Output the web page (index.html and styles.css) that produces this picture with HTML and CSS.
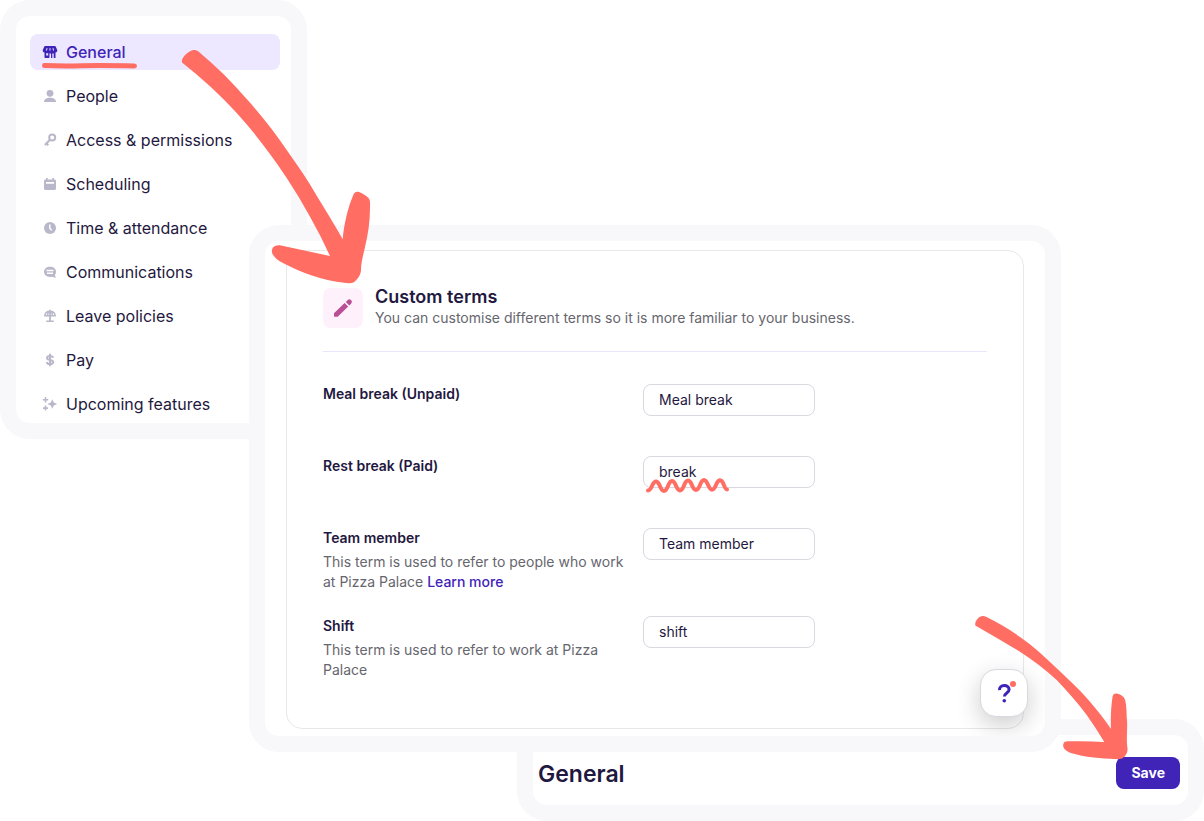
FILE: index.html
```html
<!DOCTYPE html>
<html lang="en">
<head>
<meta charset="utf-8">
<title>General settings</title>
<link rel="stylesheet" href="styles.css">
</head>
<body>
<main class="collage">
  <section class="panel panel-nav">
    <nav class="nav" aria-label="Settings">
      <a class="nav-item is-active" href="#general">
        <svg class="nav-icon" viewBox="0 0 16 16"><path fill-rule="evenodd" d="M3.200 2h9.600c.5 0 .8.2.9.600L15.200 6c.4 1.200-.3 2.300-1.700 2.400V14H9V9.500H7.500V13c0 .6-.4 1-1 1h-3c-.6 0-1-.4-1-1V8.400C1.100 8.300.4 7.200.8 6l1.500-3.400c.1-.4.4-.6.900-.6zM4.200 9.200v2.300h2V9.200zM10.300 9.500V14h1.400V9.500z"/><path class="awning" d="M5 4.200L4.500 6.500M8 4.200v2.300M11 4.200l.5 2.300"/></svg>
        <span>General</span>
        <svg class="underline" viewBox="0 0 96 8" aria-hidden="true"><path d="M2.500 3.500Q20 4.200 40 3.700T92.500 4"/></svg>
      </a>
      <a class="nav-item" href="#people">
        <svg class="nav-icon" viewBox="0 0 16 16"><circle cx="8" cy="5.300" r="3.400"/><path d="M2 14c0-2.600 2.200-4.200 6-4.200s6 1.600 6 4.200z"/></svg>
        <span>People</span>
      </a>
      <a class="nav-item" href="#access">
        <svg class="nav-icon" viewBox="0 0 16 16"><circle class="line" cx="10.200" cy="5.600" r="3"/><path class="line" d="M8 7.800L2.900 13M4.300 11.300l2 2"/></svg>
        <span>Access &amp; permissions</span>
      </a>
      <a class="nav-item" href="#scheduling">
        <svg class="nav-icon" viewBox="0 0 16 16"><path fill-rule="evenodd" d="M4 2h1.700v1.500h4.600V2H12v1.500h.5c.9 0 1.500.6 1.500 1.500v7.500c0 .9-.6 1.500-1.500 1.500h-9c-.9 0-1.500-.6-1.500-1.500V5c0-.9.600-1.500 1.500-1.500H4zM4 6v1.800h8V6z"/></svg>
        <span>Scheduling</span>
      </a>
      <a class="nav-item" href="#time">
        <svg class="nav-icon" viewBox="0 0 16 16"><circle cx="8" cy="8" r="6"/><path class="cut" d="M7.800 4.500v4l2 1.800"/></svg>
        <span>Time &amp; attendance</span>
      </a>
      <a class="nav-item" href="#communications">
        <svg class="nav-icon" viewBox="0 0 16 16"><path d="M8 2.800c3.500 0 6 2 6 4.900 0 1.500-.6 2.600-1.200 3.400L14 13.800l-4.200-1.100c-.6.100-1.200.2-1.800.2-3.500 0-6-2.200-6-5.100s2.500-5 6-5z"/><path class="cut" d="M4.500 6.500h7M5 9.300h6"/></svg>
        <span>Communications</span>
      </a>
      <a class="nav-item" href="#leave">
        <svg class="nav-icon" viewBox="0 0 16 16"><path fill-rule="evenodd" d="M7.200 2.600V1.800h1.600v.8C12 2.900 14 5 14 8.500h-3.200H8.900v4h2.900V14H4.200v-1.500h2.900v-4H2C2 5 4 2.900 7.200 2.600zM5.400 4.700C4.400 5.300 3.800 6.100 3.600 7.100h1.300c0-.9.200-1.700.5-2.400zM7.100 4.700c-.5.700-.8 1.500-.8 2.400h.8zM8.900 4.700v2.400h.8c0-.9-.3-1.700-.8-2.400zM10.600 4.700c.3.700.5 1.500.5 2.400h1.300c-.2-1-.8-1.800-1.800-2.400z"/></svg>
        <span>Leave policies</span>
      </a>
      <a class="nav-item" href="#pay">
        <svg class="nav-icon" viewBox="0 0 16 16"><path class="line" d="M11 5.800C10.800 4.500 9.600 3.900 8 3.900s-3 .7-3 2c0 3 6.200 1.200 6.200 4.200 0 1.300-1.300 2.100-3.200 2.100-1.800 0-3-.8-3.200-2.200M8 1.800v12.400"/></svg>
        <span>Pay</span>
      </a>
      <a class="nav-item" href="#upcoming">
        <svg class="nav-icon" viewBox="0 0 16 16"><path d="M10.300 3.200l1.500 3.300L15.200 8l-3.400 1.500-1.500 3.300-1.500-3.300L5.400 8l3.400-1.500zM2.700 1h1.600v1.900h1.900v1.600H4.300v1.900H2.700V4.500H.8V2.900h1.900zM2.700 9.600h1.600v1.700h1.700v1.600H4.300v1.700H2.700v-1.700H1v-1.600h1.700z"/></svg>
        <span>Upcoming features</span>
      </a>
    </nav>
  </section>

  <section class="panel panel-header">
    <header class="page-header">
      <h1 class="page-title">General</h1>
      <button class="save" type="button">Save</button>
    </header>
  </section>

  <section class="panel panel-terms">
    <div class="terms-view">
      <form class="card">
        <header class="card-header">
          <span class="card-badge">
            <svg class="pencil" viewBox="0 0 20 20"><path d="M1 15.300L11.600 5l3.600 3.500L4.700 18.800H1.900c-.5 0-.9-.4-.9-.9zM12.800 3.900l2-2c.9-.9 2.100-.9 3 0l.4.400c.9.900.9 2.200 0 3.100l-1.900 2z"/></svg>
          </span>
          <div class="card-heading">
            <h2 class="card-title">Custom terms</h2>
            <p class="card-text">You can customise different terms so it is more familiar to your business.</p>
          </div>
        </header>
        <div class="terms">
          <div class="term">
            <div class="term-info"><label class="term-label" for="meal">Meal break (Unpaid)</label></div>
            <div class="term-field"><input class="term-input" id="meal" type="text" value="Meal break"></div>
          </div>
          <div class="term">
            <div class="term-info"><label class="term-label" for="rest">Rest break (Paid)</label></div>
            <div class="term-field">
              <input class="term-input" id="rest" type="text" value="break">
              <svg class="squiggle" viewBox="0 0 86 18" aria-hidden="true"><path d="M4 13.500C8 13.500 8 4.500 12 4.500S16 14 20 14 24 4 28 4s4 9.500 8 9.500 4-10 8-10 4 9.500 8 9.500 4-10 8-10 4 9.700 8 9.700 4-9.500 8-9.500S80 12.500 83 12.500"/></svg>
            </div>
          </div>
          <div class="term">
            <div class="term-info">
              <label class="term-label" for="member">Team member</label>
              <p class="term-text">This term is used to refer to people who work at Pizza Palace <a class="link" href="#learn">Learn more</a></p>
            </div>
            <div class="term-field"><input class="term-input" id="member" type="text" value="Team member"></div>
          </div>
          <div class="term">
            <div class="term-info">
              <label class="term-label" for="shift">Shift</label>
              <p class="term-text">This term is used to refer to work at Pizza Palace</p>
            </div>
            <div class="term-field"><input class="term-input" id="shift" type="text" value="shift"></div>
          </div>
        </div>
      </form>
      <button class="help" type="button" aria-label="Help">
        <svg class="help-icon" viewBox="0 0 24 24"><path class="help-hook" d="M7.500 9.200C7.300 6.300 9.300 4.500 12.200 4.500s4.900 1.600 4.900 4.100c0 3.400-4.700 3.300-4.700 6.900"/><circle class="help-point" cx="12.300" cy="19.800" r="1.800"/><circle class="help-dot" cx="21" cy="3" r="3"/></svg>
      </button>
    </div>
  </section>

  <svg class="arrow arrow-terms" viewBox="180 48 192 238" aria-hidden="true"><path d="M182 62.500C180.500 58 189 50 194 50Q196.500 49.700 198.500 51.500C216 66 232 82 246.700 99C262 116 275 133 286.700 150C298 166 308 180 316.700 195.700C326 211 335 225 342.700 239.300C344 224 348 207 353.500 194.500C354.500 192 356.500 191.300 359 192C363 193.500 366 195.500 368.500 198C370.500 200 370 204 370 208C370 222 368 234 365 247C363 256 361 263 361 270C361 275 357 280 353.500 282.500Q351 283.500 346 283C320 280 300 272 283 263C275 259 271 254 272 249.500C273 246 277 244.700 281 245.500L330 256Q321 236 310 216.700Q299 196.500 286.700 178C271 154 254 132 236.700 113Q212 86 182 62.500Z"/></svg>
  <svg class="arrow arrow-save" viewBox="973 614 157 147" aria-hidden="true"><path d="M975.300 625.500C974.500 621 979 616 982.700 616Q984 615.700 986 616.800C998 623 1009 629 1020 637C1033 646 1045 657 1056.700 668.300C1068 679 1079 689 1090 701.700C1098 711 1105 720 1111 729C1110.500 718 1111 707 1112.500 697C1113 694 1115 693 1117.500 693.800C1120 694.500 1122 695.500 1124 697.500Q1126.500 701 1126.700 716.700C1128 728 1126 737 1127.300 747C1128.500 753 1125 757 1122 758.500Q1119 759.500 1110 758.700C1095 758 1083 756.500 1070 752.700C1066 751 1062.500 748 1063.300 744.500C1063.700 741.500 1066 741.300 1070 741.300Q1087 740.800 1104.300 742Q1096 728 1086.700 715C1077 702 1067 691 1056.700 680C1045 669 1033 660 1020 651.700Q998 638.500 975.300 625.500Z"/></svg>
</main>
</body>
</html>
```
FILE: styles.css
```css
* {
  box-sizing: border-box;
}

body {
  margin: 0;
  background: #fff;
  color: #1f1840;
  font-family: Inter, "Liberation Sans", sans-serif;
  font-size: 14px;
  line-height: 20px;
}

h1,
h2,
p {
  margin: 0;
}

/* Three panels that overlap at the corners */
.collage {
  position: relative;
  display: grid;
  grid-template-columns: 249px 58px 210px 1fr 143px;
  grid-template-rows: 225px 214px auto 33px auto;
}

.panel {
  background: #fff;
  border: 16px solid #f8f8fb;
  border-radius: 30px;
}

.panel-nav {
  grid-area: 1 / 1 / 3 / 3;
}

.panel-terms {
  grid-area: 2 / 2 / 5 / 5;
}

.panel-header {
  grid-area: 4 / 4 / 6 / 6;
}

/* Settings navigation */
.nav {
  display: flex;
  flex-direction: column;
  gap: 8px;
  padding: 18px 11px 0 14px;
}

.nav-item {
  position: relative;
  display: flex;
  align-items: center;
  gap: 8px;
  height: 36px;
  padding: 0 12px;
  border-radius: 8px;
  color: #1f1840;
  font-size: 16px;
  line-height: 24px;
  text-decoration: none;
}

.nav-item.is-active {
  background: #ede8ff;
  color: #4024b8;
  font-weight: 500;
}

.nav-icon {
  width: 16px;
  height: 16px;
  fill: #b8b8ca;
}

.is-active .nav-icon {
  fill: #4024b8;
}

.nav-icon .line {
  fill: none;
  stroke: #b8b8ca;
  stroke-width: 2;
}

.nav-icon .cut {
  fill: none;
  stroke: #fff;
  stroke-width: 1.5;
}

.nav-icon .awning {
  fill: none;
  stroke: #ede8ff;
  stroke-width: 1;
}

.underline {
  position: absolute;
  left: 12px;
  bottom: 0;
  width: 96px;
  height: 8px;
  fill: none;
  stroke: #ff6d63;
  stroke-width: 5;
  stroke-linecap: round;
}

/* Custom terms */
.terms-view {
  position: relative;
  height: 100%;
  padding: 9px 21px 7px;
  border-radius: 14px;
  overflow: hidden;
}

.card {
  padding: 37px 36px 48px;
  border: 1px solid #e8e8eb;
  border-radius: 16px;
}

.card-header {
  display: flex;
  gap: 12px;
  padding-bottom: 23px;
  border-bottom: 1px solid #e9e6fb;
}

.card-badge {
  display: flex;
  align-items: center;
  justify-content: center;
  width: 40px;
  height: 40px;
  border-radius: 8px;
  background: #fef1fb;
}

.pencil {
  width: 20px;
  height: 20px;
  fill: #b94f95;
}

.card-heading {
  display: grid;
  gap: 2px;
}

.card-title {
  font-size: 18px;
  font-weight: 600;
  line-height: 18px;
}

.card-text,
.term-text {
  color: #66666e;
}

.terms {
  display: grid;
  gap: 24px;
  padding-top: 32px;
}

.term {
  display: grid;
  grid-template-columns: 304px 172px;
  gap: 16px;
  min-height: 48px;
}

.term-info {
  display: flex;
  flex-direction: column;
  gap: 4px;
}

.term-label {
  font-weight: 600;
}

.term-field {
  position: relative;
}

.term-input {
  display: block;
  width: 100%;
  height: 32px;
  padding: 0 15px 2px;
  border: 1px solid #d8d8de;
  border-radius: 8px;
  background: #fff;
  color: #1f1840;
  font: inherit;
}

.squiggle {
  position: absolute;
  left: 1px;
  top: 21px;
  width: 86px;
  height: 18px;
  fill: none;
  stroke: #ff6d63;
  stroke-width: 4;
  stroke-linecap: round;
}

.link {
  color: #4024b8;
  font-weight: 500;
  text-decoration: none;
}

.help {
  position: absolute;
  right: 17px;
  bottom: 19px;
  display: flex;
  align-items: center;
  justify-content: center;
  width: 48px;
  height: 48px;
  padding: 0;
  border: 1px solid #d8d8de;
  border-radius: 16px;
  background: #fff;
  box-shadow: 0 8px 24px rgba(0, 0, 0, 0.2);
}

.help-icon {
  width: 24px;
  height: 24px;
  overflow: visible;
}

.help-hook {
  fill: none;
  stroke: #4024b8;
  stroke-width: 3;
}

.help-point {
  fill: #4024b8;
}

.help-dot {
  fill: #ff6d63;
}

/* Page header */
.page-header {
  display: flex;
  align-items: center;
  justify-content: space-between;
  padding: 21px 8px 15px 5px;
}

.page-title {
  padding-top: 2px;
  font-size: 23px;
  font-weight: 600;
  line-height: 32px;
}

.save {
  height: 32px;
  padding: 0 15px;
  border: 0;
  border-radius: 8px;
  background: #4024b8;
  color: #fff;
  font: inherit;
  font-weight: 700;
}

/* Hand-drawn arrows over the panels */
.arrow {
  position: absolute;
  fill: #ff6d63;
}

.arrow-terms {
  left: 180px;
  top: 48px;
  width: 192px;
  height: 238px;
}

.arrow-save {
  right: 74px;
  bottom: 60px;
  width: 157px;
  height: 147px;
}
```
